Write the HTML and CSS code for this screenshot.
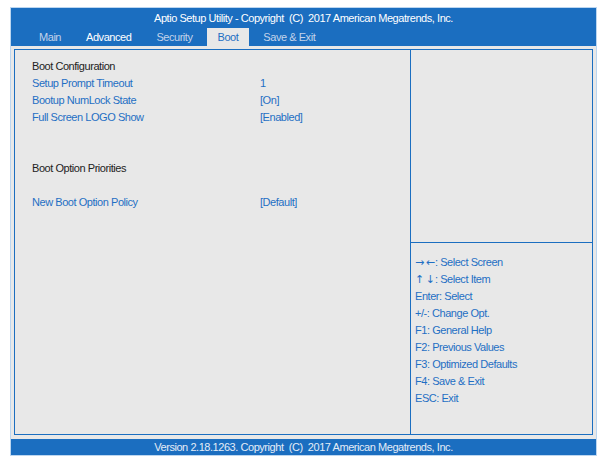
FILE: index.html
```html
<!DOCTYPE html>
<html lang="en">
<head>
<meta charset="utf-8">
<title>Aptio Setup Utility</title>
<link rel="stylesheet" href="styles.css">
</head>
<body>
<div class="frame">
  <header class="head">
    <div class="title">Aptio Setup Utility - Copyright&nbsp; (C)&nbsp; 2017 American Megatrends, Inc.</div>
    <nav class="tabs">
      <span class="tab">Main</span>
      <span class="tab tab-hi">Advanced</span>
      <span class="tab">Security</span>
      <span class="tab tab-on">Boot</span>
      <span class="tab">Save &amp; Exit</span>
    </nav>
  </header>
  <main class="body">
    <div class="box">
      <section class="items">
        <div class="row"><span class="label head-label">Boot Configuration</span></div>
        <div class="row"><span class="label">Setup Prompt Timeout</span><span class="value">1</span></div>
        <div class="row"><span class="label">Bootup NumLock State</span><span class="value">[On]</span></div>
        <div class="row"><span class="label">Full Screen LOGO Show</span><span class="value">[Enabled]</span></div>
        <div class="row"></div>
        <div class="row"></div>
        <div class="row"><span class="label head-label">Boot Option Priorities</span></div>
        <div class="row"></div>
        <div class="row"><span class="label">New Boot Option Policy</span><span class="value">[Default]</span></div>
      </section>
      <aside class="side">
        <div class="desc"></div>
        <ul class="keys">
          <li><span class="arr">→←</span>: Select Screen</li>
          <li><span class="arr">↑↓</span>: Select Item</li>
          <li>Enter: Select</li>
          <li>+/-: Change Opt.</li>
          <li>F1: General Help</li>
          <li>F2: Previous Values</li>
          <li>F3: Optimized Defaults</li>
          <li>F4: Save &amp; Exit</li>
          <li>ESC: Exit</li>
        </ul>
      </aside>
    </div>
  </main>
  <footer class="foot">Version 2.18.1263. Copyright&nbsp; (C)&nbsp; 2017 American Megatrends, Inc.</footer>
</div>
</body>
</html>
```

FILE: styles.css
```css
html, body {
  margin: 0;
  padding: 0;
  background: #ffffff;
}

body {
  font-family: "Liberation Sans", Arial, sans-serif;
  font-size: 11px;
  letter-spacing: -0.45px;
}

.frame {
  margin: 7px 0 0 10px;
  width: 585px;
  border: 1px solid #bcd6f0;
  background: #1b6ec0;
}

/* blue title bar with the menu tabs */
.head {
  background: #1b6ec0;
  color: #ffffff;
}

.title {
  height: 20px;
  line-height: 21px;
  text-align: center;
}

.tabs {
  display: flex;
  gap: 3px;
  height: 18px;
  padding-left: 17px;
}

.tab {
  padding: 0 11px;
  line-height: 19px;
  color: #c3d3ea;
}

.tab-hi {
  color: #ffffff;
}

.tab-on {
  background: #e8e8e8;
  color: #1f6fc4;
}

/* grey work area */
.body {
  background: #e8e8e8;
  padding: 3px 3px 4px 3px;
}

.box {
  display: grid;
  grid-template-columns: 396px 1fr;
  height: 384px;
  border: 1px solid #1b6ec0;
}

.items {
  padding: 7px 0 0 17px;
  border-right: 1px solid #1b6ec0;
}

.row {
  display: flex;
  height: 17px;
  line-height: 18px;
}

.label {
  width: 228px;
  color: #1f6fc4;
}

.head-label {
  color: #222222;
}

.value {
  color: #1f6fc4;
}

.side {
  display: flex;
  flex-direction: column;
}

.desc {
  height: 192px;
  border-bottom: 1px solid #1b6ec0;
}

.keys {
  list-style: none;
  margin: 0;
  padding: 10px 0 0 4px;
  color: #1f6fc4;
}

.keys li {
  height: 17px;
  line-height: 18px;
}

/* key arrows need a face with full-size arrow glyphs */
.arr {
  font-family: "DejaVu Sans", sans-serif;
  font-size: 11px;
  letter-spacing: 1.5px;
  margin-right: -1.5px;
}

.foot {
  height: 16px;
  line-height: 16px;
  text-align: center;
  color: #e4ecf7;
}
```
